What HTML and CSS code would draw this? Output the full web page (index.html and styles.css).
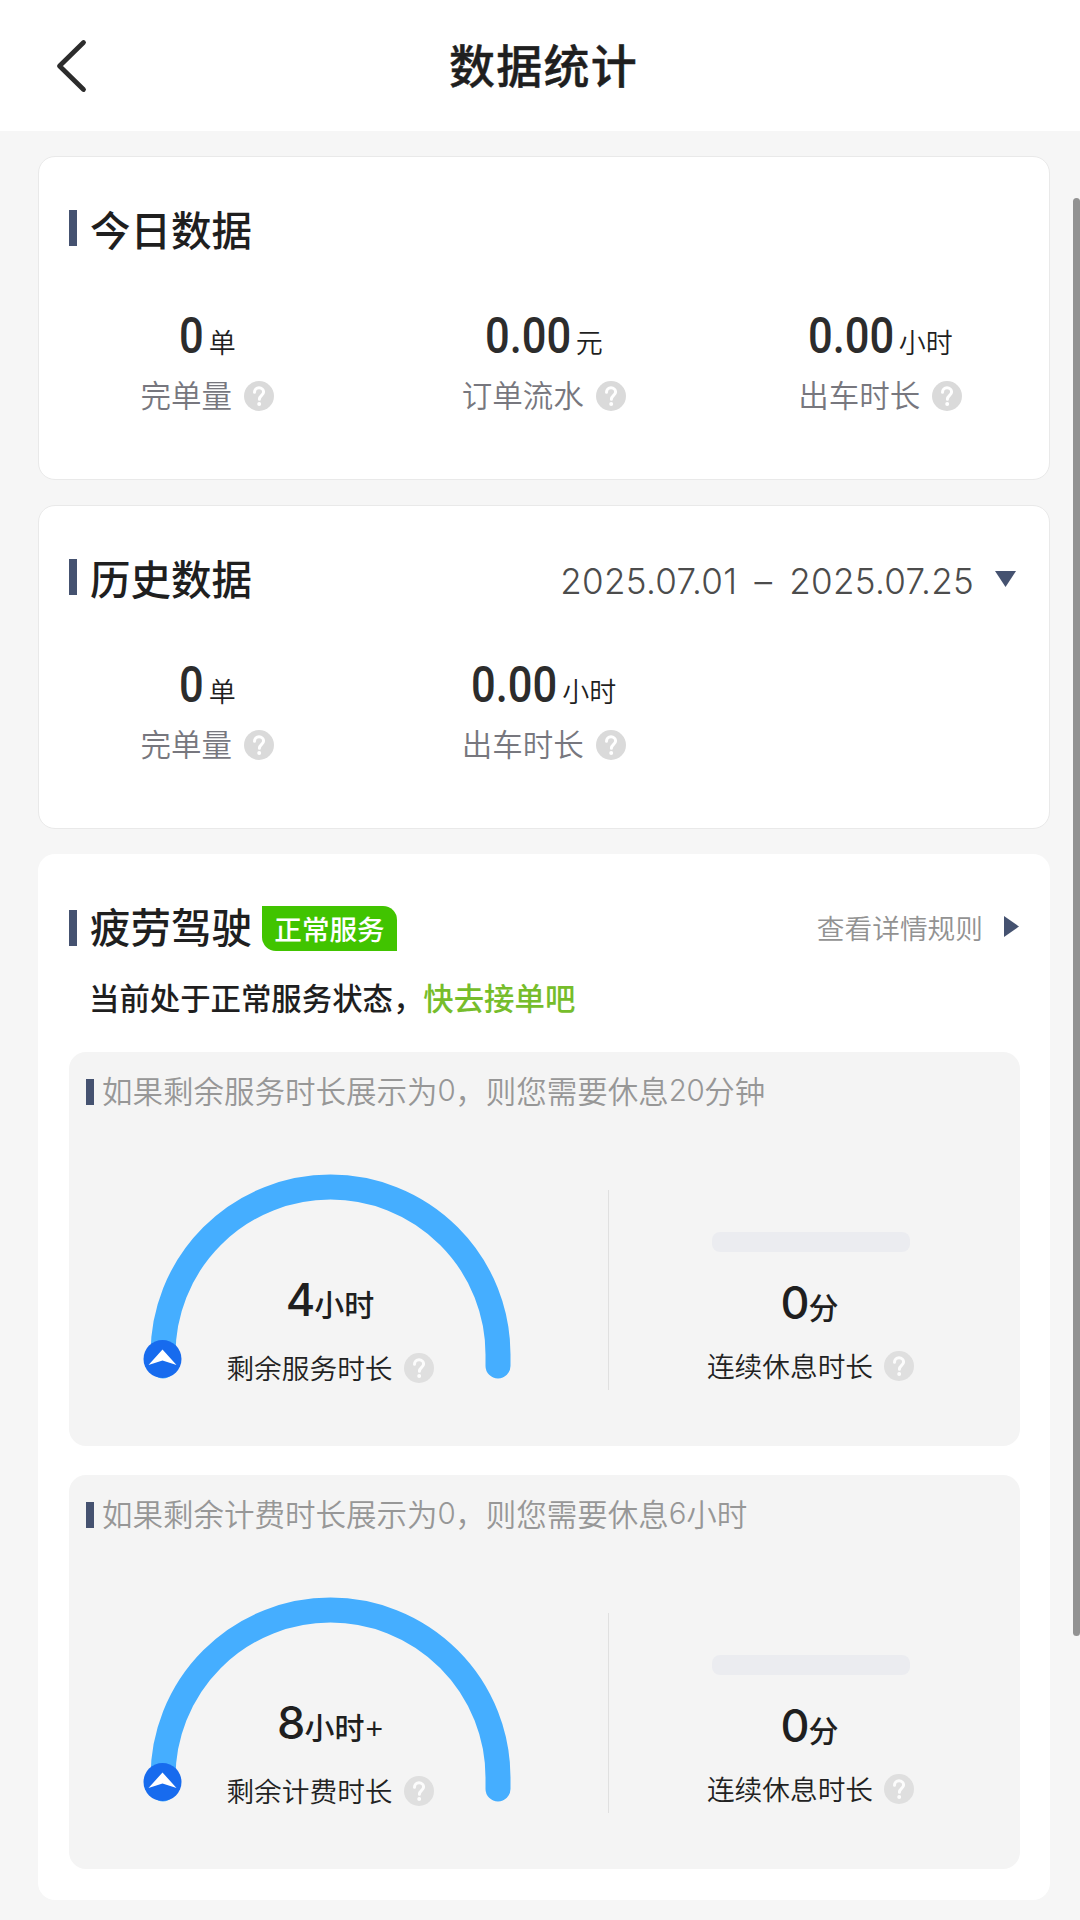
FILE: index.html
```html
<!DOCTYPE html>
<html lang="zh-CN">
<head>
<meta charset="utf-8">
<title>数据统计</title>
<link rel="stylesheet" href="styles.css">
</head>
<body>
<svg class="defs" width="0" height="0" aria-hidden="true">
  <symbol id="help" viewBox="0 0 30 30">
    <circle cx="15" cy="15" r="15" fill="#dadada"/>
    <path d="M10.500 11.300C10.500 8.600 12.400 6.800 15 6.800s4.600 1.800 4.600 4.200c0 3.200-4.200 3.600-4.200 7.200" fill="none" stroke="#fff" stroke-width="3" stroke-linecap="round"/>
    <circle cx="15.200" cy="23" r="2" fill="#fff"/>
  </symbol>
  <symbol id="gauge" viewBox="0 0 400 220">
    <path d="M33 204V192.500A167.500 167.500 0 0 1 368 192.500V204" fill="none" stroke="#45aeff" stroke-width="25" stroke-linecap="round"/>
    <circle cx="32.500" cy="197" r="19" fill="#176bee"/>
    <path d="M32.500 187.500L46.500 203L32.500 198.500L18.500 203Z" fill="#fff"/>
  </symbol>
</svg>

<header class="topbar">
  <svg class="back" viewBox="0 0 32 54"><path d="M28.500 3.500L4.500 27L28.500 50.500" fill="none" stroke="#2c2c2c" stroke-width="4.800" stroke-linecap="round" stroke-linejoin="round"/></svg>
  <h1>数据统计</h1>
</header>

<main class="content">
  <section class="card stats-card">
    <div class="card-head"><h2>今日数据</h2></div>
    <div class="stats">
      <div class="stat">
        <div class="value"><b class="short">0</b><span>单</span></div>
        <div class="label">完单量<svg class="help"><use href="#help"/></svg></div>
      </div>
      <div class="stat">
        <div class="value"><b>0.00</b><span>元</span></div>
        <div class="label">订单流水<svg class="help"><use href="#help"/></svg></div>
      </div>
      <div class="stat">
        <div class="value"><b>0.00</b><span>小时</span></div>
        <div class="label">出车时长<svg class="help"><use href="#help"/></svg></div>
      </div>
    </div>
  </section>

  <section class="card stats-card">
    <div class="card-head">
      <h2>历史数据</h2>
      <div class="range">2025.07.01 – 2025.07.25<svg class="caret-down" viewBox="0 0 21 16"><path d="M0 0H21L10.500 16Z" fill="#455270"/></svg></div>
    </div>
    <div class="stats">
      <div class="stat">
        <div class="value"><b class="short">0</b><span>单</span></div>
        <div class="label">完单量<svg class="help"><use href="#help"/></svg></div>
      </div>
      <div class="stat">
        <div class="value"><b>0.00</b><span>小时</span></div>
        <div class="label">出车时长<svg class="help"><use href="#help"/></svg></div>
      </div>
    </div>
  </section>

  <section class="card fatigue">
    <div class="card-head">
      <h2>疲劳驾驶</h2>
      <span class="badge">正常服务</span>
      <div class="rules">查看详情规则<svg class="caret-right" viewBox="0 0 15 21"><path d="M0 0L15 10.500L0 21Z" fill="#455270"/></svg></div>
    </div>
    <p class="status">当前处于正常服务状态，<em>快去接单吧</em></p>

    <div class="panel">
      <p class="note">如果剩余服务时长展示为<i>0</i>，则您需要休息<i>20</i>分钟</p>
      <div class="meters">
        <div class="remaining">
          <svg class="gauge"><use href="#gauge"/></svg>
          <div class="meter-text">
            <div class="amount"><b>4</b>小时</div>
            <div class="caption">剩余服务时长<svg class="help"><use href="#help"/></svg></div>
          </div>
        </div>
        <div class="rest">
          <div class="track"></div>
          <div class="amount"><b>0</b>分</div>
          <div class="caption">连续休息时长<svg class="help"><use href="#help"/></svg></div>
        </div>
      </div>
    </div>

    <div class="panel">
      <p class="note">如果剩余计费时长展示为<i>0</i>，则您需要休息<i>6</i>小时</p>
      <div class="meters">
        <div class="remaining">
          <svg class="gauge"><use href="#gauge"/></svg>
          <div class="meter-text">
            <div class="amount"><b>8</b>小时<i>+</i></div>
            <div class="caption">剩余计费时长<svg class="help"><use href="#help"/></svg></div>
          </div>
        </div>
        <div class="rest">
          <div class="track"></div>
          <div class="amount"><b>0</b>分</div>
          <div class="caption">连续休息时长<svg class="help"><use href="#help"/></svg></div>
        </div>
      </div>
    </div>
  </section>
</main>
<div class="scrollbar"></div>
</body>
</html>
```
FILE: styles.css
```css
* { box-sizing: border-box; margin: 0; padding: 0; }
body {
  width: 1080px;
  height: 1920px;
  overflow: hidden;
  background: #f6f6f6;
  color: #1f1f1f;
  font-family: "Noto Sans CJK SC", sans-serif;
}
.defs { position: absolute; }
i, em { font-style: normal; }
h1, h2 { font-weight: 500; white-space: nowrap; }

.topbar {
  display: grid;
  grid-template-columns: 120px 1fr 120px;
  align-items: center;
  height: 131px;
  background: #fff;
}
.back { width: 32px; height: 54px; margin-left: 55px; }
.topbar h1 { font-size: 46px; line-height: 60px; letter-spacing: 1.3px; text-align: center; padding: 0 0 5px 7px; -webkit-text-stroke: .4px; }

.content {
  display: flex;
  flex-direction: column;
  gap: 25px;
  padding: 25px 30px 0 38px;
}
.card { background: #fff; border-radius: 17px; }
.stats-card { height: 324px; border: 1px solid #e9e9e9; padding-top: 42px; }
.card-head { display: flex; align-items: center; height: 60px; padding: 0 33px 0 30px; }
.card-head h2 { display: flex; align-items: center; font-size: 40.5px; line-height: 60px; }
.card-head h2::before { content: ""; width: 8px; height: 36px; margin: -2px 13px 0 0; background: #455270; }

.stats { display: grid; grid-template-columns: repeat(3, 336.5px); margin-top: 49px; }
.stat { display: flex; flex-direction: column; align-items: center; }
.value { display: flex; align-items: baseline; height: 56px; line-height: 56px; font-size: 27px; font-weight: 350; }
.value b {
  width: 84px;
  margin-right: 7px;
  color: #2c2c2c;
  font-family: Roboto, sans-serif;
  font-size: 50px;
  font-weight: 500;
  transform: scaleX(.87);
  transform-origin: 0 50%;
}
.value b.short { width: 23px; }
.label { display: flex; align-items: center; height: 44px; margin-top: 8px; font-size: 30.5px; font-weight: 350; color: #77777e; }
.help { width: 30px; height: 30px; margin: 3px 0 0 12px; }

.range { display: flex; align-items: center; margin-left: auto; padding-top: 5px; font: 300 35px/60px Inter, sans-serif; color: #4c4c4c; letter-spacing: .3px; word-spacing: 7px; white-space: nowrap; }
.caret-down { width: 21px; height: 16px; margin: -3px 0 0 21px; }

.fatigue { height: 1046px; padding: 42px 30px 0 31px; }
.fatigue .card-head { padding: 0; }
.fatigue h2::before { margin-top: 4px; }
.badge {
  width: 135px;
  height: 45px;
  margin: 5px 0 0 10px;
  border-radius: 0 14px 0 14px;
  background: #41c400;
  color: #fff;
  font-size: 27.6px;
  font-weight: 500;
  line-height: 44px;
  text-align: center;
}
.rules { display: flex; align-items: center; margin-left: auto; padding: 2px 1px 0 0; font-size: 27.7px; font-weight: 350; color: #929292; }
.caret-right { width: 15px; height: 21px; margin: -2px 0 0 21px; }
.status { height: 44px; margin: 19px 0 33px 20px; font-size: 30.4px; font-weight: 500; line-height: 44px; }
.status em { color: #76bd2b; }

.panel { height: 394px; padding: 16px 17px 0; border-radius: 17px; background: #f4f4f4; }
.panel + .panel { margin-top: 29px; }
.note { display: flex; align-items: center; height: 44px; font-size: 30.5px; font-weight: 350; color: #979797; white-space: nowrap; }
.note::before { content: ""; width: 8px; height: 26px; margin: 3px 8px 0 0; background: #455270; }
.note i { font-family: Inter, sans-serif; font-size: 29.5px; font-weight: 300; letter-spacing: -.4px; }

.meters { display: grid; grid-template-columns: 522px 1fr; }
.remaining { display: grid; padding: 50px 0 0 44px; }
.gauge, .meter-text { grid-area: 1 / 1; width: 400px; }
.gauge { height: 220px; }
.meter-text { padding-top: 110px; }
.rest { height: 200px; margin-top: 78px; padding: 42px 0 0 9px; border-left: 1px solid #e0e0e0; }
.track { width: 198px; height: 20px; margin: 0 auto 23px; border-radius: 8px; background: #ebecf0; }
.amount { display: flex; align-items: baseline; justify-content: center; height: 56px; line-height: 56px; font-size: 30px; font-weight: 500; }
.amount b { font-family: Inter, sans-serif; font-size: 45px; font-weight: 500; letter-spacing: -1px; }
.amount i { padding-left: 1px; font-family: "Liberation Sans", sans-serif; font-weight: 400; }
.caption { display: flex; align-items: center; justify-content: center; height: 40px; margin-top: 19px; font-size: 27.7px; font-weight: 350; color: #222; }
.rest .amount { margin-left: -2px; }
.rest .caption { margin-top: 14px; }
.caption .help { margin: 1px 0 0 11px; opacity: .8; }

.scrollbar { position: absolute; top: 198px; right: 0; width: 7px; height: 1438px; border-radius: 4px; background: #929292; }
```
